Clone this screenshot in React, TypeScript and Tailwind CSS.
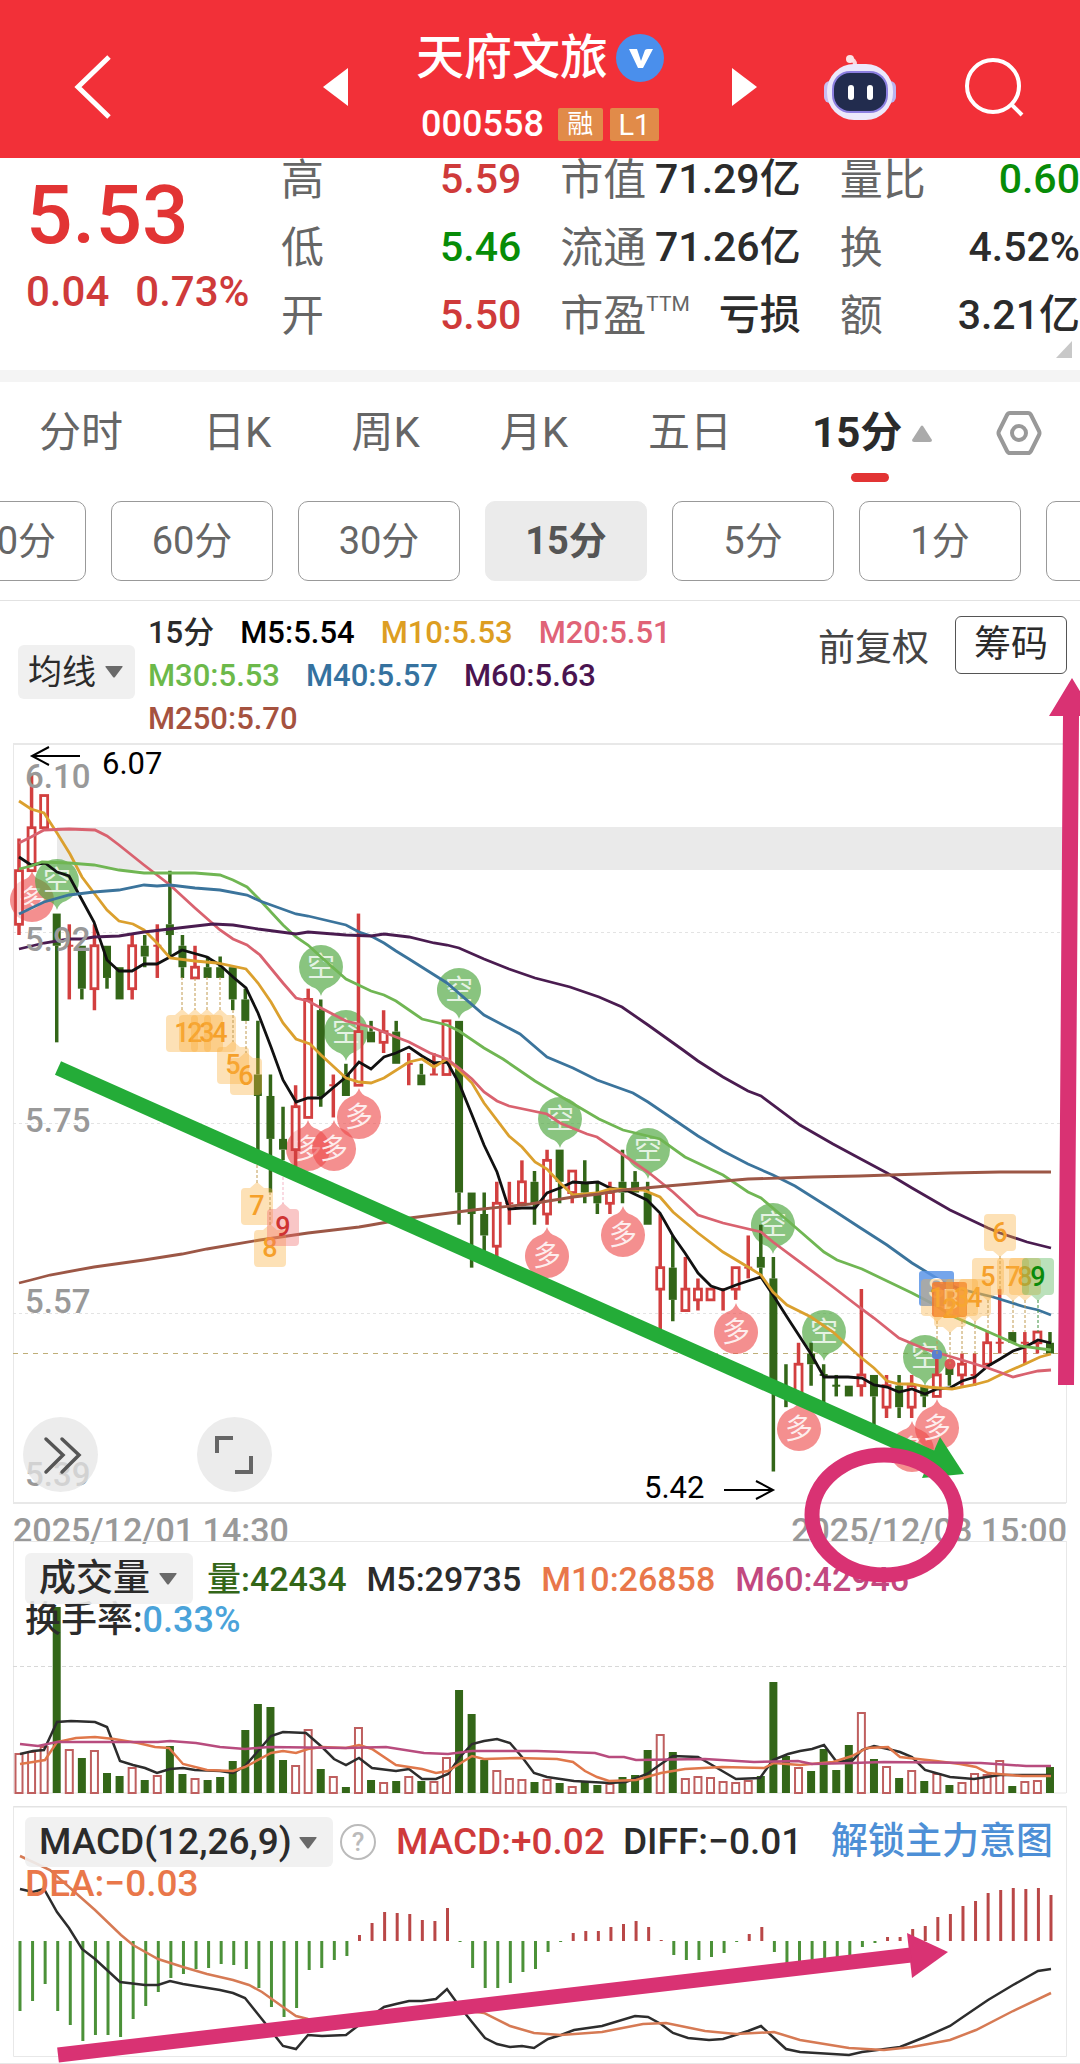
import React, { useState } from "react";

type Point = [number, number];

// side, high, body top, body bottom, low (price x 100), volume, macd
type Candle = ["r" | "g", number, number, number, number, number, number];

interface Quote {
  label: string;
  sup?: string;
  value: string;
  color: string;
}

interface Marker {
  x: number;
  y: number;
}

interface Count {
  x: number;
  y: number;
  text: string;
  tone: "orange" | "red" | "green";
  stem: number;
}

const RED = "#d23f3f";
const GREEN = "#336618";

const quotes: Quote[][] = [
  [
    { label: "高", value: "5.59", color: "text-[#cf3a3a]" },
    { label: "低", value: "5.46", color: "text-[#078c07]" },
    { label: "开", value: "5.50", color: "text-[#cf3a3a]" },
  ],
  [
    { label: "市值", value: "71.29亿", color: "text-[#2b2b2b]" },
    { label: "流通", value: "71.26亿", color: "text-[#2b2b2b]" },
    { label: "市盈", sup: "TTM", value: "亏损", color: "text-[#2b2b2b]" },
  ],
  [
    { label: "量比", value: "0.60", color: "text-[#078c07]" },
    { label: "换", value: "4.52%", color: "text-[#2b2b2b]" },
    { label: "额", value: "3.21亿", color: "text-[#2b2b2b]" },
  ],
];

const tabs = ["分时", "日K", "周K", "月K", "五日"];
const periods = ["120分", "60分", "30分", "15分", "5分", "1分", "更多"];

const averages = [
  { text: "15分", color: "text-[#2b2b2b]" },
  { text: "M5:5.54", color: "text-black" },
  { text: "M10:5.53", color: "text-[#dd9e22]" },
  { text: "M20:5.51", color: "text-[#e06377]" },
  { text: "M30:5.53", color: "text-[#6cb94a]" },
  { text: "M40:5.57", color: "text-[#35729f]" },
  { text: "M60:5.63", color: "text-[#4a1450]" },
  { text: "M250:5.70", color: "text-[#a5523f]" },
];

const candles: Candle[] = [
  ["r", 601, 598, 593, 592, 39, -70], ["r", 607, 602, 598, 598, 41, -60], ["r", 605, 605, 602, 602, 46, -43],
  ["g", 594, 594, 591, 582, 186, -70], ["r", 593, 591, 591, 586, 43, -84], ["g", 591, 591, 587, 586, 35, -100],
  ["r", 593, 591, 587, 585, 42, -94], ["g", 591, 591, 588, 587, 20, -94], ["g", 589, 589, 586, 586, 17, -96],
  ["r", 592, 591, 587, 586, 25, -78], ["g", 592, 591, 590, 589, 13, -65], ["r", 593, 591, 591, 588, 17, -51],
  ["g", 598, 593, 592, 590, 47, -37], ["g", 592, 591, 589, 588, 19, -33], ["r", 591, 589, 588, 588, 14, -28],
  ["g", 590, 589, 588, 588, 13, -27], ["g", 590, 589, 588, 588, 16, -23], ["g", 589, 589, 586, 585, 32, -24],
  ["g", 587, 586, 584, 584, 63, -28], ["g", 584, 579, 577, 571, 89, -47], ["g", 579, 577, 573, 568, 86, -66],
  ["g", 576, 573, 572, 571, 33, -76], ["r", 578, 576, 572, 570, 27, -67], ["r", 587, 586, 575, 575, 63, -29],
  ["g", 586, 585, 577, 576, 24, -27], ["r", 579, 578, 578, 575, 16, -19], ["g", 580, 579, 577, 577, 6, -15],
  ["r", 594, 583, 578, 578, 65, 6], ["g", 584, 583, 582, 582, 13, 18], ["r", 585, 583, 582, 581, 10, 29],
  ["g", 584, 583, 580, 580, 12, 28], ["r", 581, 580, 580, 578, 16, 27], ["g", 580, 579, 578, 578, 12, 21],
  ["r", 581, 579, 579, 579, 11, 20], ["r", 584, 584, 579, 579, 35, 33], ["g", 584, 584, 568, 565, 103, -1],
  ["g", 568, 568, 566, 561, 79, -27], ["g", 568, 566, 564, 562, 33, -47], ["r", 569, 567, 563, 562, 22, -47],
  ["r", 569, 567, 567, 565, 14, -42], ["r", 571, 569, 567, 567, 13, -31], ["g", 570, 569, 567, 565, 11, -28],
  ["r", 572, 571, 566, 565, 13, -11], ["g", 572, 572, 569, 567, 10, -1], ["r", 570, 570, 568, 567, 6, 8],
  ["g", 571, 569, 568, 567, 12, 10], ["g", 569, 568, 567, 566, 8, 10], ["r", 569, 568, 567, 566, 9, 14],
  ["g", 572, 569, 568, 567, 16, 17], ["g", 570, 569, 568, 568, 18, 20], ["g", 569, 568, 565, 565, 43, 14],
  ["r", 566, 561, 559, 555, 58, 1], ["g", 564, 561, 558, 556, 41, -14], ["r", 562, 559, 557, 557, 14, -19],
  ["r", 560, 559, 558, 557, 16, -19], ["r", 559, 559, 558, 558, 15, -16], ["r", 559, 559, 559, 557, 11, -12],
  ["r", 561, 561, 559, 558, 10, -1], ["r", 564, 561, 561, 560, 12, 7], ["g", 565, 562, 561, 560, 17, 14],
  ["g", 562, 560, 550, 542, 111, -11], ["g", 552, 549, 549, 548, 37, -25], ["r", 554, 552, 549, 549, 25, -27],
  ["g", 554, 553, 552, 550, 22, -24], ["g", 552, 551, 551, 548, 44, -20], ["g", 551, 550, 550, 549, 23, -17],
  ["g", 550, 550, 549, 549, 48, -14], ["r", 559, 551, 550, 549, 80, -6], ["g", 551, 551, 549, 546, 34, -2],
  ["r", 551, 550, 548, 547, 26, 4], ["g", 551, 550, 548, 547, 15, 4], ["r", 551, 550, 548, 547, 22, 12],
  ["g", 550, 550, 549, 548, 12, 15], ["r", 553, 551, 549, 549, 19, 24], ["g", 552, 552, 551, 550, 8, 27],
  ["r", 553, 552, 551, 550, 10, 35], ["r", 553, 551, 551, 550, 19, 40], ["r", 555, 554, 552, 552, 18, 48],
  ["r", 559, 554, 554, 553, 32, 51], ["g", 555, 555, 554, 554, 7, 53], ["r", 555, 554, 554, 552, 11, 52],
  ["r", 555, 555, 554, 553, 12, 53], ["g", 555, 554, 553, 553, 26, 46],
];

const priceLines: { color: string; points: Point[] }[] = [
  {
    color: "#111111",
    points: [
      [19, 857], [31, 865], [45, 863], [57, 872], [69, 876], [82, 900], [94, 922], [107, 960], [119, 971], [132, 971], [144, 964],
      [157, 964], [170, 957], [182, 950], [207, 957], [220, 965], [233, 977], [246, 988], [258, 1013], [271, 1047], [283, 1080],
      [296, 1102], [308, 1098], [321, 1098], [334, 1087], [346, 1077], [359, 1062], [371, 1069], [384, 1057], [396, 1053],
      [409, 1047], [422, 1056], [434, 1063], [447, 1062], [459, 1083], [472, 1115], [484, 1145], [497, 1172], [509, 1209],
      [522, 1208], [535, 1208], [547, 1193], [560, 1188], [573, 1182], [586, 1183], [598, 1182], [610, 1188], [628, 1191],
      [647, 1200], [660, 1213], [673, 1236], [685, 1253], [698, 1273], [711, 1286], [723, 1290], [736, 1285], [748, 1281],
      [761, 1277], [773, 1295], [787, 1317], [800, 1337], [811, 1354], [824, 1377], [848, 1377], [862, 1378], [874, 1385],
      [887, 1387], [899, 1392], [912, 1389], [925, 1394], [937, 1389], [950, 1388], [962, 1381], [975, 1377], [988, 1366],
      [1000, 1359], [1013, 1351], [1025, 1347], [1038, 1340], [1051, 1343],
    ],
  },
  {
    color: "#dba02e",
    points: [
      [19, 801], [31, 809], [44, 813], [57, 833], [70, 854], [82, 877], [94, 893], [107, 910], [119, 921], [133, 924], [144, 930],
      [157, 943], [170, 958], [195, 961], [217, 963], [246, 969], [258, 983], [271, 1002], [283, 1023], [296, 1039], [310, 1044],
      [321, 1055], [346, 1078], [359, 1082], [371, 1083], [384, 1078], [409, 1062], [422, 1059], [434, 1067], [447, 1059],
      [459, 1070], [472, 1083], [484, 1103], [509, 1136], [522, 1147], [535, 1162], [547, 1169], [560, 1183], [573, 1195],
      [597, 1193], [610, 1189], [643, 1190], [660, 1197], [673, 1212], [698, 1233], [723, 1252], [748, 1267], [761, 1275],
      [773, 1292], [787, 1305], [811, 1317], [833, 1332], [858, 1355], [874, 1368], [887, 1381], [899, 1384], [912, 1384],
      [927, 1387], [952, 1389], [973, 1385], [988, 1381], [1000, 1375], [1025, 1364], [1040, 1357], [1051, 1354],
    ],
  },
  {
    color: "#d9626f",
    points: [
      [19, 843], [31, 837], [44, 830], [69, 829], [95, 830], [107, 836], [119, 845], [144, 865], [170, 885], [195, 908], [220, 930],
      [233, 939], [247, 945], [260, 955], [283, 983], [296, 998], [308, 1001], [321, 1008], [346, 1021], [371, 1027], [396, 1037],
      [409, 1042], [430, 1053], [447, 1059], [459, 1068], [472, 1079], [484, 1092], [497, 1101], [509, 1106], [547, 1114],
      [560, 1123], [587, 1134], [597, 1137], [622, 1154], [648, 1172], [673, 1192], [698, 1215], [723, 1223], [761, 1232],
      [773, 1242], [800, 1262], [833, 1287], [859, 1307], [874, 1318], [899, 1338], [925, 1349], [962, 1360], [988, 1368],
      [1013, 1377], [1025, 1374], [1038, 1371], [1051, 1370],
    ],
  },
  {
    color: "#70b653",
    points: [
      [19, 869], [31, 866], [42, 862], [69, 863], [94, 865], [119, 870], [144, 873], [195, 873], [220, 875], [233, 880], [247, 887],
      [258, 898], [283, 925], [296, 937], [308, 945], [321, 957], [346, 979], [371, 991], [384, 995], [396, 1001], [422, 1019],
      [447, 1025], [459, 1031], [484, 1048], [503, 1059], [535, 1081], [560, 1096], [599, 1119], [623, 1130], [660, 1139],
      [685, 1157], [723, 1175], [748, 1192], [761, 1198], [787, 1220], [824, 1252], [837, 1260], [862, 1269], [887, 1281],
      [912, 1293], [937, 1306], [950, 1315], [975, 1326], [1000, 1337], [1020, 1346], [1051, 1350],
    ],
  },
  {
    color: "#3b749c",
    points: [
      [19, 914], [44, 902], [69, 895], [94, 892], [119, 890], [144, 885], [157, 886], [170, 885], [195, 888], [220, 890],
      [247, 895], [260, 901], [296, 914], [308, 916], [346, 925], [359, 932], [371, 936], [384, 943], [396, 951], [409, 959],
      [447, 983], [484, 1015], [520, 1034], [547, 1057], [573, 1068], [597, 1080], [633, 1093], [648, 1102], [673, 1119],
      [698, 1136], [723, 1151], [748, 1164], [773, 1175], [795, 1186], [833, 1210], [859, 1227], [887, 1245], [912, 1263],
      [943, 1282], [960, 1289], [993, 1297], [1025, 1307], [1038, 1310], [1051, 1315],
    ],
  },
  {
    color: "#4a1c50",
    points: [
      [19, 949], [44, 943], [69, 939], [82, 939], [94, 937], [119, 936], [144, 932], [170, 929], [187, 927], [213, 924], [233, 925],
      [258, 929], [296, 934], [308, 932], [346, 935], [371, 936], [384, 934], [409, 937], [434, 943], [447, 945], [459, 948],
      [484, 959], [509, 969], [535, 978], [570, 987], [599, 997], [622, 1007], [648, 1025], [683, 1050], [698, 1061], [723, 1077],
      [748, 1091], [761, 1096], [800, 1125], [833, 1144], [859, 1158], [887, 1173], [912, 1188], [950, 1210], [988, 1228],
      [1000, 1233], [1027, 1242], [1051, 1248],
    ],
  },
  {
    color: "#9c5746",
    points: [
      [19, 1283], [31, 1280], [50, 1275], [94, 1267], [144, 1260], [182, 1254], [207, 1249], [260, 1240], [308, 1233], [359, 1227],
      [371, 1225], [410, 1218], [473, 1210], [530, 1204], [573, 1197], [599, 1194], [623, 1190], [667, 1186], [713, 1182],
      [748, 1179], [813, 1177], [859, 1176], [950, 1173], [1000, 1172], [1051, 1172],
    ],
  },
];

const volumeLines: { color: string; points: Point[] }[] = [
  {
    color: "#2d2d2d",
    points: [
      [20, 1754], [33, 1751], [44, 1750], [57, 1722], [71, 1721], [95, 1722], [107, 1727], [120, 1761], [133, 1765], [145, 1768],
      [157, 1773], [170, 1769], [183, 1768], [195, 1770], [220, 1771], [233, 1773], [245, 1766], [258, 1751], [271, 1736],
      [283, 1732], [306, 1733], [322, 1747], [334, 1759], [346, 1765], [359, 1758], [372, 1768], [396, 1771], [409, 1769],
      [422, 1779], [436, 1779], [448, 1774], [460, 1757], [472, 1744], [484, 1741], [497, 1739], [510, 1743], [522, 1757],
      [534, 1773], [547, 1777], [574, 1781], [609, 1783], [626, 1782], [647, 1774], [661, 1764], [673, 1756], [698, 1757],
      [712, 1765], [736, 1779], [760, 1778], [773, 1760], [788, 1754], [800, 1751], [812, 1749], [824, 1745], [836, 1761],
      [852, 1761], [862, 1750], [874, 1746], [888, 1749], [900, 1752], [912, 1757], [925, 1770], [950, 1777], [974, 1779],
      [1000, 1775], [1051, 1775],
    ],
  },
  {
    color: "#e0774a",
    points: [
      [20, 1764], [33, 1762], [45, 1760], [57, 1742], [76, 1738], [95, 1737], [114, 1739], [138, 1743], [155, 1747], [169, 1748],
      [183, 1764], [207, 1770], [233, 1771], [245, 1767], [271, 1753], [283, 1751], [296, 1753], [308, 1749], [322, 1747],
      [346, 1748], [359, 1745], [372, 1749], [396, 1765], [422, 1769], [436, 1773], [448, 1771], [472, 1756], [484, 1759],
      [517, 1758], [557, 1759], [573, 1762], [585, 1771], [597, 1777], [609, 1781], [636, 1780], [661, 1773], [685, 1769],
      [722, 1767], [764, 1768], [774, 1763], [800, 1765], [833, 1762], [852, 1756], [867, 1748], [888, 1747], [900, 1757],
      [936, 1761], [960, 1764], [976, 1767], [988, 1773], [1022, 1776], [1051, 1776],
    ],
  },
  {
    color: "#b84c7e",
    points: [
      [20, 1744], [38, 1746], [57, 1742], [95, 1742], [158, 1742], [170, 1741], [196, 1743], [220, 1747], [245, 1749], [269, 1747],
      [346, 1748], [386, 1747], [424, 1753], [448, 1754], [472, 1751], [537, 1751], [595, 1753], [609, 1757], [624, 1757],
      [636, 1760], [705, 1759], [754, 1762], [798, 1761], [812, 1764], [852, 1763], [884, 1762], [981, 1763], [1026, 1766],
      [1051, 1766],
    ],
  },
];

const macdLines: { color: string; points: Point[] }[] = [
  {
    color: "#2d2d2d",
    points: [
      [20, 1889], [33, 1892], [44, 1889], [57, 1912], [69, 1928], [82, 1949], [95, 1959], [120, 1982], [145, 1985], [158, 1985],
      [170, 1981], [183, 1984], [220, 1990], [233, 1993], [245, 1998], [265, 2023], [283, 2046], [296, 2049], [308, 2035],
      [322, 2036], [346, 2035], [359, 2025], [384, 2007], [396, 2004], [409, 2001], [422, 2001], [436, 1999], [447, 1989],
      [460, 2007], [472, 2022], [485, 2038], [497, 2044], [510, 2047], [522, 2046], [534, 2048], [548, 2039], [561, 2035],
      [574, 2030], [602, 2026], [635, 2016], [648, 2017], [661, 2024], [673, 2033], [688, 2038], [709, 2040], [723, 2039],
      [748, 2031], [761, 2026], [774, 2038], [786, 2049], [800, 2052], [849, 2055], [862, 2052], [900, 2047], [925, 2037],
      [950, 2026], [963, 2017], [988, 2000], [1013, 1985], [1038, 1971], [1051, 1969],
    ],
  },
  {
    color: "#d67a54",
    points: [
      [20, 1856], [33, 1862], [50, 1870], [69, 1887], [95, 1910], [121, 1935], [133, 1945], [158, 1959], [183, 1967], [207, 1974],
      [233, 1980], [249, 1985], [262, 1992], [283, 2007], [296, 2016], [308, 2019], [346, 2024], [384, 2020], [447, 2008],
      [484, 2013], [510, 2026], [534, 2033], [561, 2035], [602, 2032], [643, 2024], [666, 2023], [705, 2031], [736, 2034],
      [774, 2032], [800, 2040], [849, 2048], [884, 2050], [912, 2047], [950, 2040], [976, 2030], [1013, 2011], [1051, 1993],
    ],
  },
];

const shortMarks: Marker[] = [
  { x: 57, y: 881 }, { x: 321, y: 967 }, { x: 346, y: 1032 }, { x: 459, y: 990 }, { x: 560, y: 1119 },
  { x: 648, y: 1150 }, { x: 773, y: 1225 }, { x: 824, y: 1332 }, { x: 925, y: 1357 },
];

const longMarks: Marker[] = [
  { x: 32, y: 900 }, { x: 308, y: 1149 }, { x: 334, y: 1149 }, { x: 359, y: 1117 }, { x: 547, y: 1256 },
  { x: 623, y: 1235 }, { x: 736, y: 1332 }, { x: 799, y: 1429 }, { x: 912, y: 1450 }, { x: 937, y: 1428 },
];

// y is the top of the tag, stem is where its dashed line starts on the candle
const lowCounts: Count[] = [
  { x: 182, y: 1015, text: "1", tone: "orange", stem: 977 },
  { x: 195, y: 1015, text: "2", tone: "orange", stem: 978 },
  { x: 207, y: 1015, text: "3", tone: "orange", stem: 977 },
  { x: 220, y: 1015, text: "4", tone: "orange", stem: 977 },
  { x: 233, y: 1047, text: "5", tone: "orange", stem: 1010 },
  { x: 246, y: 1058, text: "6", tone: "orange", stem: 1021 },
  { x: 257, y: 1188, text: "7", tone: "orange", stem: 1160 },
  { x: 270, y: 1230, text: "8", tone: "orange", stem: 1192 },
  { x: 283, y: 1209, text: "9", tone: "red", stem: 1162 },
];

const highCounts: Count[] = [
  { x: 937, y: 1279, text: "1", tone: "orange", stem: 1354 },
  { x: 950, y: 1290, text: "2", tone: "orange", stem: 1364 },
  { x: 962, y: 1279, text: "3", tone: "orange", stem: 1354 },
  { x: 975, y: 1279, text: "4", tone: "orange", stem: 1354 },
  { x: 988, y: 1258, text: "5", tone: "orange", stem: 1332 },
  { x: 1000, y: 1214, text: "6", tone: "orange", stem: 1289 },
  { x: 1013, y: 1258, text: "7", tone: "orange", stem: 1332 },
  { x: 1025, y: 1258, text: "8", tone: "orange", stem: 1332 },
  { x: 1038, y: 1258, text: "9", tone: "green", stem: 1332 },
];

const tones = {
  orange: { box: "#fbb040", text: "#f5a02a", stem: "#c09a50" },
  red: { box: "#ee6a6a", text: "#cf3333", stem: "#f5b5c5" },
  green: { box: "#4cb04c", text: "#0a8a0a", stem: "#3c8f3c" },
};

const candleX = (i: number) => 19 + i * 12.573;
const priceY = (cents: number) => 1353.5 - (cents - 553) * 10.73;
const toPoints = (points: Point[]) => points.map((p) => p.join(",")).join(" ");

const Caret: React.FC<{ className: string }> = ({ className }) => (
  <svg viewBox="0 0 18 12" className={`pointer-events-none absolute h-3 w-[18px] ${className}`}>
    <path d="M1 0h16q1 0 .5 1L10 11q-1 1-2 0L.5 1Q0 0 1 0z" fill="#6a6a6a" />
  </svg>
);

const Header: React.FC = () => (
  <header className="grid h-[158px] grid-cols-[1fr_auto_1fr] items-center bg-[#f23038] pt-6 text-white">
    <button aria-label="返回" className="mb-2 ml-[70px] justify-self-start">
      <svg viewBox="0 0 44 66" className="h-[66px] w-11" fill="none" stroke="white" strokeWidth="5">
        <path d="M39 3L8 33L39 63" />
      </svg>
    </button>
    <div className="flex items-center">
      <button aria-label="上一只" className="mb-2">
        <svg viewBox="0 0 25 38" className="h-[38px] w-[25px]"><path d="M25 0v38L0 19z" fill="white" /></svg>
      </button>
      <div className="flex w-[384px] flex-col items-center">
        <h1 className="flex items-center gap-2 text-[48px] leading-[66px] font-medium">
          天府文旅
          <svg viewBox="0 0 48 48" className="size-12">
            <circle cx="24" cy="24" r="24" fill="#4a8fec" />
            <path d="M13 15h8l4 12 4-11q1-1 3-1h5L27 34h-5z" fill="white" />
          </svg>
        </h1>
        <p className="flex items-center gap-[7px] text-[36px] leading-[66px] font-medium">
          <span className="mr-[7px]">000558</span>
          <span className="h-[33px] w-[45px] rounded-xs bg-[#e18b49] text-center text-[26px] leading-8 font-normal">融</span>
          <span className="h-[33px] w-[49px] rounded-xs bg-[#e18b49] text-center text-[29px] leading-[34px] font-normal">L1</span>
        </p>
      </div>
      <button aria-label="下一只" className="mb-2">
        <svg viewBox="0 0 25 38" className="h-[38px] w-[25px]"><path d="M0 0v38l25-19z" fill="white" /></svg>
      </button>
    </div>
    <div className="mr-14 mb-2 flex items-center gap-[68px] justify-self-end">
      <button aria-label="智能助手">
        <svg viewBox="0 0 72 68" className="h-[68px] w-[72px]">
          <path d="M31 12q0-6-6-6" fill="none" stroke="#fbd5da" strokeWidth="4" strokeLinecap="round" />
          <circle cx="26" cy="6" r="4" fill="#fbe3e6" />
          <rect x="0" y="28" width="12" height="22" rx="6" fill="#c9bdf2" />
          <rect x="60" y="28" width="12" height="22" rx="6" fill="#b9b4f0" />
          <rect x="3" y="11" width="66" height="56" rx="27" fill="#ece8fb" />
          <rect x="8" y="18" width="56" height="42" rx="18" fill="#8c7fe0" />
          <rect x="10" y="20" width="52" height="38" rx="16" fill="#222c4e" />
          <rect x="24" y="32" width="6" height="15" rx="3" fill="white" />
          <rect x="43" y="32" width="6" height="15" rx="3" fill="white" />
        </svg>
      </button>
      <button aria-label="搜索">
        <svg viewBox="0 0 60 60" className="size-[60px]" fill="none" stroke="white" strokeWidth="4">
          <circle cx="29" cy="29" r="26" />
          <path d="M47 47l11 11" />
        </svg>
      </button>
    </div>
  </header>
);

const QuotePanel: React.FC = () => (
  <section className="relative flex h-[212px] overflow-hidden">
    <div className="w-[281px] shrink-0 pt-[17px] pl-[26px] font-medium text-[#e23434]">
      <p className="text-[82px] leading-[80px]">5.53</p>
      <p className="flex gap-[26px] text-[42px] leading-[74px] text-[#cf3a3a]">
        <span>0.04</span>
        <span>0.73%</span>
      </p>
    </div>
    <div className="-mt-3 grid flex-1 grid-cols-3 gap-x-[39px]">
      {quotes.map((column) => (
        <dl key={column[0].label}>
          {column.map((quote) => (
            <div key={quote.label} className="flex h-[68px] items-center justify-between whitespace-nowrap">
              <dt className="flex text-[43px] text-[#666]">
                {quote.label}
                {quote.sup && <span className="text-[21px] leading-10">{quote.sup}</span>}
              </dt>
              <dd className={`text-[41px] font-medium ${quote.color}`}>{quote.value}</dd>
            </div>
          ))}
        </dl>
      ))}
    </div>
    <svg viewBox="0 0 16 17" className="absolute right-2 bottom-3 h-[17px] w-4"><path d="M16 0v17H0z" fill="#c8c8c8" /></svg>
  </section>
);

const PriceChart: React.FC = () => (
  <svg viewBox="0 743 1080 761" className="block w-full">
    <rect x="57" y="827" width="1009" height="43" fill="#eaeaea" />
    <path d="M13 744H1066M13 1503H1066" stroke="#e8e8e8" strokeWidth="2" />
    <path d="M13.5 744V1503M1066.5 744V1503" stroke="#e8e8e8" />
    <path d="M13 932.5H1066M13 1123.5H1066M13 1313.5H1066" stroke="#e3e3e3" strokeDasharray="3 3" />
    <path d="M13 1353.5H1066" stroke="#bfae78" strokeDasharray="5 5" />

    {longMarks.map((mark, i) => (
      <g key={i}>
        <path
          d={`M${mark.x} ${mark.y - 29}q2 7 9 9a22 22 0 1 1 -18 0q7 -2 9 -9z`}
          fill="#ee4a4a"
          fillOpacity="0.62"
        />
        <text x={mark.x} y={mark.y + 10} fontSize="28" textAnchor="middle" fill="white" fillOpacity="0.85">多</text>
      </g>
    ))}
    {shortMarks.map((mark, i) => (
      <g key={i}>
        <path
          d={`M${mark.x} ${mark.y + 29}q-2 -7 -9 -9a22 22 0 1 1 18 0q-7 2 -9 9z`}
          fill="#4aa53a"
          fillOpacity="0.65"
        />
        <text x={mark.x} y={mark.y + 10} fontSize="28" textAnchor="middle" fill="white" fillOpacity="0.8">空</text>
      </g>
    ))}

    {candles.map(([side, high, top, bottom, low], i) => {
      const x = candleX(i);
      const color = side === "r" ? RED : GREEN;
      const bodyTop = priceY(top);
      const bodyBottom = priceY(bottom);
      if (top === bottom) {
        return (
          <g key={i} stroke={color}>
            <path d={`M${x} ${priceY(high)}V${priceY(low)}`} strokeWidth="3.5" />
            <path d={`M${x - 4} ${bodyTop}H${x + 4}`} strokeWidth="2" />
          </g>
        );
      }
      return (
        <g key={i}>
          <path d={`M${x} ${priceY(high)}V${bodyTop}M${x} ${bodyBottom}V${priceY(low)}`} stroke={color} strokeWidth="3.5" />
          {side === "r" ? (
            <rect x={x - 3.5} y={bodyTop} width="7" height={bodyBottom - bodyTop} fill="white" fillOpacity="0.6" stroke={color} strokeWidth="2.8" />
          ) : (
            <rect x={x - 4} y={bodyTop} width="8" height={bodyBottom - bodyTop} fill={color} />
          )}
        </g>
      );
    })}

    {priceLines.map((line) => (
      <polyline key={line.color} points={toPoints(line.points)} fill="none" stroke={line.color} strokeWidth="2.8" />
    ))}

    {lowCounts.map((item) => (
      <g key={item.text}>
        <path d={`M${item.x} ${item.stem}V${item.y - 5}`} stroke={tones[item.tone].stem} strokeDasharray="3 2" />
        <path
          d={`M${item.x - 12} ${item.y}h5l7 -6l7 6h5q4 0 4 4v29q0 4 -4 4h-24q-4 0 -4 -4v-29q0 -4 4 -4z`}
          fill={tones[item.tone].box}
          fillOpacity="0.38"
        />
        <text x={item.x} y={item.y + 27} fontSize="27" fontWeight="500" textAnchor="middle" fill={tones[item.tone].text}>{item.text}</text>
      </g>
    ))}

    <rect x="919" y="1271" width="35" height="35" rx="3" fill="#5c95e8" fillOpacity="0.85" />
    <text x="936" y="1298" fontSize="27" textAnchor="middle" fill="white">S</text>
    <rect x="932" y="1282" width="35" height="35" rx="3" fill="#ee5a20" fillOpacity="0.85" />
    <text x="951" y="1309" fontSize="27" textAnchor="middle" fill="white" fillOpacity="0.8">B</text>
    <rect x="932" y="1350" width="10" height="9" rx="3" fill="#5a7fd0" />
    <circle cx="950" cy="1364" r="5.5" fill="#dd5555" />

    {highCounts.map((item) => (
      <g key={item.text}>
        <path d={`M${item.x} ${item.y + 42}V${item.stem}`} stroke={tones[item.tone].stem} strokeDasharray="3 2" />
        <path
          d={`M${item.x - 12} ${item.y}h24q4 0 4 4v29q0 4 -4 4h-5l-7 6l-7 -6h-5q-4 0 -4 -4v-29q0 -4 4 -4z`}
          fill={tones[item.tone].box}
          fillOpacity="0.38"
        />
        <text x={item.x} y={item.y + 28} fontSize="27" fontWeight="500" textAnchor="middle" fill={tones[item.tone].text}>{item.text}</text>
      </g>
    ))}

    <g fontSize="33" fontWeight="500" fill="#999">
      <text x="25" y="788">6.10</text>
      <text x="25" y="951">5.92</text>
      <text x="25" y="1132">5.75</text>
      <text x="25" y="1313">5.57</text>
      <text x="25" y="1486">5.39</text>
    </g>
    <text x="102" y="774" fontSize="31">6.07</text>
    <text x="644" y="1498" fontSize="31">5.42</text>
    <g fill="none" stroke="black" strokeWidth="2">
      <path d="M80 756H32M49 747L32 756L49 765" />
      <path d="M724 1490H773M756 1481L773 1490L756 1499" />
    </g>
  </svg>
);

const VolumeChart: React.FC = () => (
  <svg viewBox="0 1541 1080 265" className="block w-full">
    <path d="M13 1541.5H1066M13.5 1541V1793M1066.5 1541V1793M13 1793H1066" fill="none" stroke="#e8e8e8" />
    <path d="M13 1666.5H1066" stroke="#d8d8d8" strokeDasharray="4 3" />
    {candles.map(([side, , , , , volume], i) =>
      side === "r" ? (
        <rect key={i} x={candleX(i) - 3.5} y={1793 - volume} width="7" height={volume} fill="white" stroke="#bf5f5f" strokeWidth="2" />
      ) : (
        <rect key={i} x={candleX(i) - 4} y={1793 - volume} width="8" height={volume} fill={GREEN} />
      )
    )}
    {volumeLines.map((line) => (
      <polyline key={line.color} points={toPoints(line.points)} fill="none" stroke={line.color} strokeWidth="2.5" />
    ))}
  </svg>
);

const MacdChart: React.FC = () => (
  <svg viewBox="0 1806 1080 258" className="block w-full">
    <path d="M13 1806H1066" stroke="#e3e3e3" strokeWidth="3" />
    <path d="M13.5 1806V2056.5H1066.5V1806M0 2063.5H1080" fill="none" stroke="#e8e8e8" />
    {candles.map((candle, i) => (
      <path
        key={i}
        d={`M${candleX(i) + 1} 1941v${-candle[6]}`}
        stroke={candle[6] > 0 ? "#b94747" : "#4b9138"}
        strokeWidth="3"
      />
    ))}
    {macdLines.map((line) => (
      <polyline key={line.color} points={toPoints(line.points)} fill="none" stroke={line.color} strokeWidth="2.5" />
    ))}
  </svg>
);

// hand drawn marks that lie over all the charts
const Drawings: React.FC = () => (
  <svg viewBox="0 0 1080 2064" className="pointer-events-none absolute inset-x-0 top-0 w-full">
    <path d="M58 1068L935 1459" stroke="#24ac38" strokeWidth="15" />
    <path d="M964 1474L940 1437L922 1478z" fill="#24ac38" />
    <g fill="#d93273">
      <path d="M1072 678L1095 716H1079L1074 1385H1058L1063 716H1049z" />
      <path d="M948 1952L907 1933L912 1978z" />
    </g>
    <g fill="none" stroke="#d93273" strokeWidth="15">
      <ellipse cx="884" cy="1515" rx="72" ry="60" />
      <path d="M58 2055L911 1955" />
    </g>
  </svg>
);

const App: React.FC = () => {
  const [period, setPeriod] = useState("15分");

  return (
    <div className="relative overflow-hidden bg-white font-[Roboto,'Noto_Sans_CJK_SC',sans-serif] text-[#2b2b2b]">
      <Header />
      <QuotePanel />

      {/* Chart type tabs */}
      <nav className="flex h-[131px] items-start justify-between border-t-12 border-[#f4f4f4] pr-[38px] pl-[39px] text-[42px] leading-[102px] whitespace-nowrap text-[#666]">
        <div className="flex gap-20">
          {tabs.map((tab) => (
            <button key={tab}>{tab}</button>
          ))}
          <button className="relative flex items-center gap-2.5 font-bold text-[#2b2b2b]">
            {period}
            <svg viewBox="0 0 20 17" className="h-[17px] w-5"><path d="M9 1q1-1 2 0l9 14q0 2-2 2H2q-2 0-2-2z" fill="#aaa" /></svg>
            <span className="absolute top-[91px] left-[39px] h-[9px] w-[38px] rounded-full bg-[#e23434]" />
          </button>
        </div>
        <button aria-label="设置" className="mt-7">
          <svg viewBox="0 0 46 46" className="size-[46px]" fill="none" stroke="#999" strokeWidth="4">
            <path d="M14 3h18q2 0 3 2l8 16q1 2 0 4l-8 16q-1 2-3 2H14q-2 0-3-2L3 25q-1-2 0-4l8-16q1-2 3-2z" />
            <circle cx="23" cy="23" r="7" />
          </svg>
        </button>
      </nav>

      {/* Minute periods */}
      <div className="overflow-hidden border-b border-[#e2e2e2] pb-[19px]">
        <div className="-ml-[76px] flex gap-[25px]">
          {periods.map((item) => (
            <button
              key={item}
              onClick={() => setPeriod(item)}
              className={`h-20 w-[162px] shrink-0 rounded-[10px] border text-[38px] ${
                item === period ? "border-[#ebebeb] bg-[#ebebeb] font-bold text-[#555]" : "border-[#999] text-[#666]"
              }`}>
              {item}
            </button>
          ))}
        </div>
      </div>

      {/* Moving averages */}
      <section className="flex h-[142px] items-start pr-[13px] pl-[18px]">
        <div className="relative mt-11 mr-[13px]">
          <select aria-label="主图指标" className="h-[54px] w-[117px] appearance-none rounded-md bg-[#f0f0f0] pl-2.5 text-[34px] leading-[54px]">
            <option>均线</option>
          </select>
          <Caret className="top-[21px] right-3" />
        </div>
        <ul className="flex w-[552px] flex-wrap gap-x-[26px] pt-[10px] text-[31px] leading-[43px] font-medium">
          {averages.map((item) => (
            <li key={item.text} className={item.color}>{item.text}</li>
          ))}
        </ul>
        <div className="mt-3 ml-auto flex items-center gap-[26px] text-[37px]">
          <button className="pt-2 text-[#444]">前复权</button>
          <button className="h-[58px] w-[112px] rounded-md border border-[#555] leading-[54px]">筹码</button>
        </div>
      </section>

      <section className="relative">
        <PriceChart />
        <div className="absolute bottom-3 left-[23px] flex gap-[99px]">
          <button aria-label="展开" className="size-[75px] rounded-full bg-[#e6e6e6]/75">
            <svg viewBox="0 0 75 75" fill="none" stroke="#555" strokeWidth="3.5" strokeLinecap="round">
              <path d="M23 22l17 16-17 17M39 22l17 16-17 17" />
            </svg>
          </button>
          <button aria-label="全屏" className="size-[75px] rounded-full bg-[#ececec]">
            <svg viewBox="0 0 75 75" fill="none" stroke="#666" strokeWidth="4">
              <path d="M20 36V21h16M54 39v16H38" />
            </svg>
          </button>
        </div>
      </section>
      <div className="flex h-[37px] justify-between pt-3 pr-[13px] pl-[13px] text-[34px] leading-7 font-medium text-[#999]">
        <time>2025/12/01 14:30</time>
        <time>2025/12/08 15:00</time>
      </div>

      {/* Volume */}
      <section className="relative">
        <VolumeChart />
        <div className="absolute top-3 left-[25px] font-medium whitespace-nowrap">
          <div className="flex items-center gap-5 text-[34px] leading-[50px]">
            <div className="relative -mr-1.5">
              <select aria-label="副图指标" className="block h-[51px] w-[168px] appearance-none rounded-md bg-[#f0f0f0]/90 pl-3.5 text-[37px] leading-[50px]">
                <option>成交量</option>
              </select>
              <Caret className="top-5 right-4" />
            </div>
            <span className="text-[#336618]">量:42434</span>
            <span>M5:29735</span>
            <span className="text-[#e9774a]">M10:26858</span>
            <span className="text-[#c2487f]">M60:42946</span>
          </div>
          <p className="text-[36px] leading-8">
            换手率:<span className="text-[#4aa3da]">0.33%</span>
          </p>
        </div>
      </section>

      {/* MACD */}
      <section className="relative">
        <MacdChart />
        <div className="absolute top-[11px] right-[27px] left-[25px] text-[37px] font-medium whitespace-nowrap">
          <div className="flex items-center leading-[50px]">
            <div className="relative mr-[7px]">
              <select aria-label="MACD 参数" className="block h-[50px] w-[308px] appearance-none rounded-md bg-[#f0f0f0]/90 pl-3.5">
                <option>MACD(12,26,9)</option>
              </select>
              <Caret className="top-5 right-4" />
            </div>
            <button aria-label="说明" className="mr-5 size-9 rounded-full border-2 border-[#bbb] text-[26px] leading-8 text-[#bbb]">?</button>
            <span className="mr-[18px] text-[#cf3a3a]">MACD:+0.02</span>
            <span>DIFF:−0.01</span>
            <a href="#" className="ml-auto text-[#4d8fd6]">解锁主力意图</a>
          </div>
          <p className="leading-[34px] text-[#e9774a]">DEA:−0.03</p>
        </div>
      </section>

      <Drawings />
    </div>
  );
};

export default App;
